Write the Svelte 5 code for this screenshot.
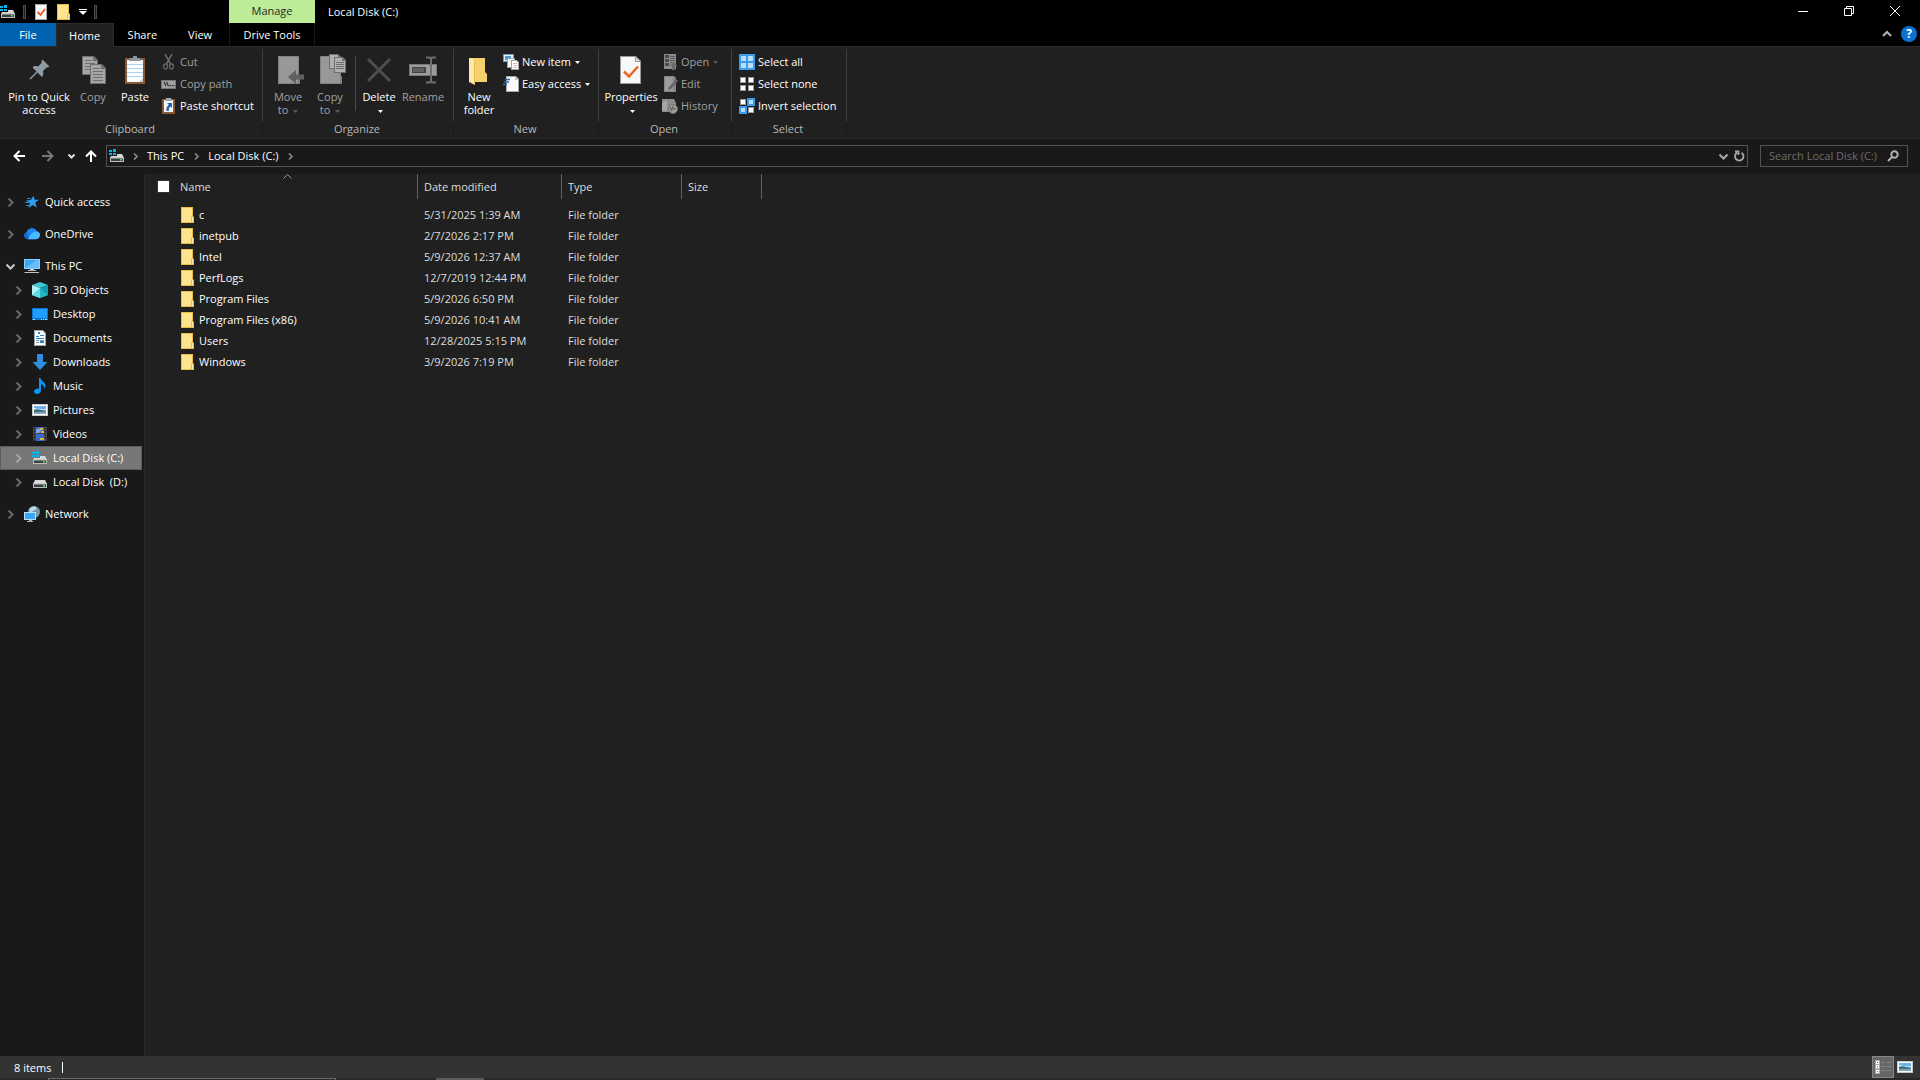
<script lang="ts">
  type NavItem = { label: string; icon: string; level: number; open?: boolean; gap?: boolean };

  const tabs = ["File", "Home", "Share", "View"];

  const navItems: NavItem[] = [
    { label: "Quick access", icon: "star", level: 0 },
    { label: "OneDrive", icon: "cloud", level: 0, gap: true },
    { label: "This PC", icon: "pc", level: 0, open: true, gap: true },
    { label: "3D Objects", icon: "cube", level: 1 },
    { label: "Desktop", icon: "desktop", level: 1 },
    { label: "Documents", icon: "document", level: 1 },
    { label: "Downloads", icon: "download", level: 1 },
    { label: "Music", icon: "music", level: 1 },
    { label: "Pictures", icon: "picture", level: 1 },
    { label: "Videos", icon: "video", level: 1 },
    { label: "Local Disk (C:)", icon: "drive-os", level: 1 },
    { label: "Local Disk  (D:)", icon: "drive", level: 1 },
    { label: "Network", icon: "network", level: 0, gap: true },
  ];

  const files = [
    { name: "c", date: "5/31/2025 1:39 AM" },
    { name: "inetpub", date: "2/7/2026 2:17 PM" },
    { name: "Intel", date: "5/9/2026 12:37 AM" },
    { name: "PerfLogs", date: "12/7/2019 12:44 PM" },
    { name: "Program Files", date: "5/9/2026 6:50 PM" },
    { name: "Program Files (x86)", date: "5/9/2026 10:41 AM" },
    { name: "Users", date: "12/28/2025 5:15 PM" },
    { name: "Windows", date: "3/9/2026 7:19 PM" },
  ];

  let activeTab = "Home";
  let selected = "Local Disk (C:)";
</script>

{#snippet caret()}
  <svg class="caret" width="5" height="3" viewBox="0 0 5 3"><path d="M0 0h5L2.5 3z" fill="currentColor" /></svg>
{/snippet}

{#snippet chevron(open = false)}
  <svg class="chevron" width="9" height="9" viewBox="0 0 9 9" fill="none" stroke="currentColor" stroke-width="2">
    <path d={open ? "M.5 2.5l4 4 4-4" : "M2.5 .5l4 4-4 4"} />
  </svg>
{/snippet}

{#snippet smallIcon(name: string)}
  <svg class="icon" width="16" height="16" viewBox="0 0 16 16">
    {#if name === "drive-os" || name === "drive"}
      <path d={name === "drive" ? "M3 6h10l2 4H1z" : "M8 6h5l2 4H1l1-2h6z"} fill="#d9d9d9" />
      <path d="M1 9.500h14V14H1z" fill="#bdbdbd" />
      <path d="M2 10.500h12V13H2z" fill="#3c3f41" />
      <path d="M11 11h2v1.500h-2z" fill="#3ee04b" />
      {#if name === "drive-os"}
        <path d="M0 2h3v2H0zM4 1h3v3H4zM0 5h3v2H0zM4 5h3v2H4z" fill="#00b4f0" />
      {/if}
    {:else if name === "star"}
      <path d="M9.600 1.500l1 4.200 4.400.1-3.700 2.800 1.400 4.900-4-2.600-4.100 3 1.200-4.700L2 6.400l4.900-.5z" fill="#2f9cf0" />
      <path d="M3 4h4v1H3zM1 8h5v1H1zM2 11h3v1H2z" fill="#2488d8" />
    {:else if name === "cloud"}
      <path d="M4 13.200C1.800 13.200 0 11.700 0 9.600 0 7.900 1.100 6.500 2.800 6.100 3.500 3.700 5.500 2.300 8 2.300c2.100 0 3.900 1.200 4.700 3 2 .3 3.300 1.900 3.300 3.800 0 2.300-1.700 4.100-4 4.100z" fill="#1268d6" />
      <path d="M2.800 6.100C3.500 3.700 5.500 2.300 8 2.300c2.100 0 3.900 1.200 4.700 3-3.200 0-5.700 2.700-7.900 6.500z" fill="#1e85f0" />
      <path d="M4 13.200c2.300-5.200 5.500-8.200 8.700-7.900 2 .3 3.300 1.900 3.300 3.800 0 2.300-1.700 4.100-4 4.100z" fill="#46baff" />
    {:else if name === "pc"}
      <path d="M0 1h16v10H0z" fill="#8fd0fa" />
      <path d="M1 2h14v8H1z" fill="#38a6f5" />
      <path d="M1 10L12 2h3v8z" fill="#65bcf8" />
      <path d="M6 11h4v1h2v1H4v-1h2zM1 14h14v1H0z" fill="#b8c4cc" />
    {:else if name === "cube"}
      <path d="M8 0l8 3-8 3-8-3z" fill="#3fcbd8" />
      <path d="M0 3l8 3v10l-8-3z" fill="#b2f1f5" />
      <path d="M16 3L8 6v10l8-3z" fill="#0f9cb4" />
      <path d="M8 6l8 7-8 3z" fill="#22b5c4" />
      <path d="M8 6l-8 7 8 3z" fill="#58dbe3" />
    {:else if name === "desktop"}
      <path d="M0 2h16v12H0z" fill="#0b76d2" />
      <path d="M1 3h14v9H1z" fill="#1e9fff" />
      <path d="M1 13h2v.8H1zM9 13h1v.8H9zM11 13h1v.8h-1zM13 13h2v.8h-2z" fill="#fff" />
    {:else if name === "document"}
      <path d="M2 0h9l3 3v13H2z" fill="#9ca3a8" />
      <path d="M3 1h7.500l2.500 2.500V15H3z" fill="#fff" />
      <path d="M6 2h2v2H6zM4 6h3v1H4zM8 5h4v1H8zM4 8h8v1H4zM8 11h4v2H8z" fill="#1c86d6" />
      <path d="M4 10h3v1H4zM4 12h3v1H4zM8 10h4v1H8z" fill="#87959e" />
    {:else if name === "download"}
      <path d="M5 0h6v8h4.500L8 16 .5 8H5z" fill="#2f8ee0" />
    {:else if name === "music"}
      <path d="M7 0h1.500c.3 3 4.500 4 5 7 .2 1.500-.4 2.800-1.500 4 .5-3-1-4.300-3-5v6.500c0 2-1.800 3.500-4 3.500-1.700 0-3-.9-3-2.400 0-1.900 2-3.100 5-3z" fill="#0a95f4" />
    {:else if name === "picture"}
      <path d="M0 2h16v12H0z" fill="#c8c8c8" />
      <path d="M1 3h14v10H1z" fill="#fff" />
      <path d="M2 4h12v8H2z" fill="#6cb1ea" />
      <path d="M2 6c3 0 5 2 12 1v1H2z" fill="#d7ecf8" />
      <path d="M2 8c3-2 7 0 12 1v3H2z" fill="#376a73" />
      <path d="M2 10l12-.5V12H2z" fill="#7fa6b8" />
    {:else if name === "video"}
      <path d="M1 1h14v14H1z" fill="#454545" />
      <path d="M4 1h8v6H4zM4 8h8v7H4z" fill="#3a66d0" />
      <path d="M4 4l3-2 2 3-2 2H4z" fill="#88a5ec" />
      <path d="M8 2h3v2H8zM9 5h3v2H9zM8 12h4v2H8z" fill="#e2b53d" />
      <path d="M2 2h1v1H2zM2 5h1v1H2zM2 8h1v1H2zM2 11h1v1H2zM2 14h1v1H2zM13 2h1v1h-1zM13 5h1v1h-1zM13 8h1v1h-1zM13 11h1v1h-1z" fill="#151515" />
    {:else if name === "network"}
      <circle cx="10" cy="6" r="6" fill="#7797a9" />
      <path d="M5.500 3C7 0 11 0 12 1c1 2-1 3-3 4s-2 2-3.500 1z" fill="#bcd8e6" />
      <path d="M0 6h12v8H0z" fill="#b9e3fc" />
      <path d="M1 7h10v6H1z" fill="#38a6f5" />
      <path d="M5 14h3v1h1v1H3v-1h2z" fill="#a9b6bd" />
    {:else if name === "check-page"}
      <path d="M2 0h12v16H2z" fill="#a8a8a8" />
      <path d="M3 1h10v14H3z" fill="#f7f9fa" />
      <path d="M4.500 8l3 3L12 5" fill="none" stroke="#f0541c" stroke-width="1.800" />
    {:else if name === "folder"}
      <path d="M1 0h12v9l1 1v6H1z" fill="#e9bd42" />
      <path d="M2 1h10v8l-1 1v5H2z" fill="#ffe48f" />
      <path d="M12 10h1v5h-1z" fill="#ffe9a8" />
    {:else if name === "cut"}
      <path d="M4 0l5.500 10M11 0L5.500 10" fill="none" stroke="#717171" stroke-width="1.500" />
      <ellipse cx="4.500" cy="12.500" rx="2" ry="2.500" fill="none" stroke="#646464" stroke-width="1.300" />
      <ellipse cx="10.500" cy="12.500" rx="2" ry="2.500" fill="none" stroke="#646464" stroke-width="1.300" />
    {:else if name === "path"}
      <path d="M0 4h15v9H0z" fill="#777" />
      <path d="M1 5h13v7H1z" fill="#a0a0a0" />
      <path d="M3 6l2 4M5.500 6l2 4" stroke="#303030" stroke-width="1.200" />
      <path d="M8.500 9H10v1.200H8.500zM10.800 9H12v1.200h-1.200zM12.500 9h1v1.200h-1z" fill="#303030" />
    {:else if name === "paste-shortcut"}
      <path d="M1 1h13v15H1z" fill="#8a5a36" />
      <path d="M3 2h9v12H3z" fill="#f5f7f9" />
      <path d="M5 0h5l1 3H4z" fill="#a0a7ac" />
      <path d="M6 5h5v5L9.500 8.500C8 9.500 7.500 11 8 13H5.500c-.6-2.500.4-4.500 2.300-6.200z" fill="#2764b0" />
    {:else if name === "new-item"}
      <path d="M0 0h11v8H0z" fill="#5da1c2" />
      <path d="M1 1h9v6H1z" fill="#e5f3f9" />
      <path d="M2 2h6v4H2z" fill="#4f9ac0" />
      <path d="M4 4h8v10H4z" fill="#9da3a7" />
      <path d="M5 5h6v8H5z" fill="#f4f4f4" />
      <path d="M8 6h6l2 2v8H8z" fill="#9da3a7" />
      <path d="M9 7h4.500L15 8.500V15H9z" fill="#fff" />
      <path d="M10 9h4v.8h-4zM10 11h4v.8h-4zM10 13h4v.8h-4z" fill="#d49ba6" />
    {:else if name === "easy-access"}
      <path d="M3 0h10l3 3v13H3z" fill="#a3a9ad" />
      <path d="M4 1h8.500L15 3.500V15H4z" fill="#fafafa" />
      <path d="M12 1v3h3z" fill="#b7bdc0" />
      <path d="M2 3.500h5M1 6h5M0 8.500h4" stroke="#2e6ca5" stroke-width="1.400" />
    {:else if name === "open"}
      <path d="M2 0h12v15H2z" fill="#8c8c8c" />
      <path d="M3 1h4v3H3zM3 5h4v3H3zM3 9h4v3H3z" fill="#4c4c4c" />
      <path d="M8 2h5v1H8zM8 4h5v1H8zM8 6h5v1H8zM8 8h2v1H8z" fill="#5a5a5a" />
      <path d="M11.500 8l4 4H13v4h-3v-4H8z" fill="#6a6a6a" />
    {:else if name === "edit"}
      <path d="M2 0h10l2 2v14H2z" fill="#858585" />
      <path d="M3 1h8v14H3z" fill="#9b9b9b" />
      <path d="M14 3l2 2-7 8-3 1 1-3z" fill="#656565" />
    {:else if name === "history"}
      <path d="M0 1h12l2 4v9H0z" fill="#8d8d8d" />
      <path d="M0 5l5-3v11H0z" fill="#a6a6a6" />
      <circle cx="11" cy="11" r="4.500" fill="#a2a2a2" stroke="#6f6f6f" />
      <path d="M11 8v3h3M8 9l2 4" fill="none" stroke="#555" stroke-width="1.200" />
    {:else if name === "select-all"}
      <path d="M0 0h16v16H0z" fill="#3a9ced" />
      <path d="M2 2h5v5H2zM9 2h5v5H9zM2 9h5v5H2zM9 9h5v5H9z" fill="#b8defa" />
    {:else if name === "select-none"}
      <path d="M1 1h6v6H1zM9 1h6v6H9zM1 9h6v6H1zM9 9h6v6H9z" fill="#9a9a9a" />
      <path d="M2 2h4v4H2zM10 2h4v4h-4zM2 10h4v4H2zM10 10h4v4h-4z" fill="#fff" />
    {:else if name === "invert"}
      <path d="M8 0h8v8H8zM0 8h8v8H0z" fill="#3a9ced" />
      <path d="M10 2h4v4h-4zM2 10h4v4H2z" fill="#b8defa" />
      <path d="M1 1h6v6H1zM9 9h6v6H9z" fill="#9a9a9a" />
      <path d="M2 2h4v4H2zM10 10h4v4h-4z" fill="#fff" />
    {/if}
  </svg>
{/snippet}

{#snippet bigIcon(name: string)}
  <svg class="big-icon" width="32" height="32" viewBox="0 0 32 32">
    {#if name === "pin"}
      <path d="M19.500 5.500l7 7-2 1-1 0-3.500 3.500c.8 3 .3 4.500-1 6l-4.500-4.500L8 25l-1.500.5.5-1.500 6.500-6.500L9.500 13.500c1.500-1.500 3-1.700 5.500-1l3.500-3.500V7z" fill="#8d9ba5" />
    {:else if name === "copy"}
      <path d="M5 2h12l4 4v15H5z" fill="#6f6f6f" />
      <path d="M6 3h10v4h4v13H6z" fill="#a5a5a5" />
      <path d="M8 6h7v1H8zM8 9h10v1H8zM8 12h10v1H8zM8 15h6v1H8z" fill="#6f6f6f" />
      <path d="M13 10h12l4 4v16H13z" fill="#6f6f6f" />
      <path d="M14 11h10v4h4v14H14z" fill="#a5a5a5" />
      <path d="M16 14h7v1h-7zM16 17h10v1H16zM16 20h10v1H16zM16 23h10v1H16zM16 26h10v1H16z" fill="#6f6f6f" />
    {:else if name === "paste"}
      <path d="M6 4h20v26H6z" fill="#8a5a36" />
      <path d="M8 6h16v22H8z" fill="#fbfcfd" />
      <path d="M8 10h16v1H8zM8 14h16v1H8zM8 18h16v1H8zM8 22h16v1H8z" fill="#a9d5ee" />
      <path d="M20 28l4-4v4z" fill="#c6ccd0" />
      <path d="M14 2h4v2h3l1 3H10l1-3h3z" fill="#8f969b" />
    {:else if name === "move" || name === "copy-to"}
      <path d="M6 2h21v20h1v8H6z" fill="#808080" />
      <path d="M7 3h19v26H7z" fill="#989898" />
      {#if name === "move"}
        <path d="M16 23l8-7v4.500h8v5h-8V30z" fill="#606060" />
      {:else}
        <path d="M15 0h9l3 3v12H15z" fill="#6f6f6f" />
        <path d="M16 1h8v3h2v10H16z" fill="#b0b0b0" />
        <path d="M20 3h9l3 3v13H20z" fill="#6f6f6f" />
        <path d="M21 4h7v3h3v11H21z" fill="#b0b0b0" />
        <path d="M22 8h8v1h-8zM22 10h8v1h-8zM22 12h8v1h-8zM22 14h8v1h-8z" fill="#6f6f6f" />
      {/if}
    {:else if name === "delete"}
      <path d="M5 5l22 22M27 5L5 27" stroke="#4e4e4e" stroke-width="3" />
    {:else if name === "rename"}
      <path d="M2 10h28v12H2z" fill="#777" />
      <path d="M3 11h26v10H3z" fill="#9c9c9c" />
      <path d="M5 13h14v6H5z" fill="#444" />
      <path d="M6 14h11v4H6z" fill="#606060" />
      <path d="M19 3.500h3c2 0 2 1 2 2v21c0 1 0 2-2 2h-3M29 3.500h-3c-2 0-2 1-2 2v21c0 1 0 2 2 2h3" fill="none" stroke="#6e6e6e" stroke-width="2" />
    {:else if name === "new-folder"}
      <path d="M6 4h16v14l2 2v8H6z" fill="#f4d16d" />
      <path d="M6 4l6 2v25l-6-3z" fill="#ffe9a6" />
      <path d="M12 6v25l-1-1V6z" fill="#e7bd55" />
    {:else if name === "properties"}
      <path d="M5 2h16l5 5v23H5z" fill="#9a9a9a" />
      <path d="M6 3h14v5h5v21H6z" fill="#f6f7f8" />
      <path d="M21 3.500V7h3.500z" fill="#dfe2e4" />
      <path d="M9 17.500l5 5 9-10" fill="none" stroke="#f26322" stroke-width="2.500" />
    {/if}
  </svg>
{/snippet}

{#snippet small(icon: string, label: string, disabled = false, menu = false)}
  <button class="small-btn" class:disabled>
    {@render smallIcon(icon)}
    <span>{label}</span>
    {#if menu}{@render caret()}{/if}
  </button>
{/snippet}

<div class="window">
  <header class="title-bar">
    <div class="title-left">
      <div class="quick-tools">
        {@render smallIcon("drive-os")}
        <i class="grip"></i>
        <button aria-label="Properties">{@render smallIcon("check-page")}</button>
        <button aria-label="New folder">{@render smallIcon("folder")}</button>
        <button aria-label="Customize Quick Access Toolbar">
          <svg width="8" height="6" viewBox="0 0 8 6" fill="currentColor"><path d="M0 0h8v1H0zM0 2h8L4 6z" /></svg>
        </button>
        <i class="grip"></i>
      </div>
      <nav class="tabs">
        {#each tabs as tab}
          <button
            class="tab"
            class:file={tab === "File"}
            class:active={activeTab === tab}
            on:click={() => {
              activeTab = tab;
            }}>{tab}</button
          >
        {/each}
      </nav>
    </div>
    <div class="tool-tab">
      <div class="manage">Manage</div>
      <button class="drive-tools">Drive Tools</button>
    </div>
    <h1>Local Disk (C:)</h1>
    <div class="title-right">
      <div class="controls">
        <button aria-label="Minimize">
          <svg width="10" height="10" viewBox="0 0 10 10"><path d="M0 5h10v1H0z" fill="#fff" /></svg>
        </button>
        <button aria-label="Restore">
          <svg width="10" height="10" viewBox="0 0 10 10" fill="none" stroke="#fff">
            <path d="M.5 2.500h7v7h-7zM2.500 2V.5h7v7H8" />
          </svg>
        </button>
        <button aria-label="Close">
          <svg width="10" height="10" viewBox="0 0 10 10" fill="none" stroke="#fff"><path d="M0 0l10 10M10 0L0 10" /></svg>
        </button>
      </div>
      <div class="ribbon-tools">
        <button aria-label="Minimize the Ribbon">
          <svg width="10" height="7" viewBox="0 0 10 7" fill="none" stroke="#b4b4b4" stroke-width="2"><path d="M1 6l4-4 4 4" /></svg>
        </button>
        <button class="help" aria-label="Help">?</button>
      </div>
    </div>
  </header>

  <div class="ribbon">
    <section class="group clipboard">
      <div class="group-body">
        <button class="big-btn pin">{@render bigIcon("pin")}<span>Pin to Quick<br />access</span></button>
        <button class="big-btn copy disabled">{@render bigIcon("copy")}<span>Copy</span></button>
        <button class="big-btn">{@render bigIcon("paste")}<span>Paste</span></button>
        <div class="stack">
          {@render small("cut", "Cut", true)}
          {@render small("path", "Copy path", true)}
          {@render small("paste-shortcut", "Paste shortcut")}
        </div>
      </div>
      <div class="group-label">Clipboard</div>
    </section>

    <section class="group organize">
      <div class="group-body">
        <button class="big-btn narrow disabled">{@render bigIcon("move")}<span>Move<br />to {@render caret()}</span></button>
        <button class="big-btn narrow disabled">{@render bigIcon("copy-to")}<span>Copy<br />to {@render caret()}</span></button>
        <i class="divider"></i>
        <button class="big-btn narrow">{@render bigIcon("delete")}<span>Delete<br />{@render caret()}</span></button>
        <button class="big-btn disabled">{@render bigIcon("rename")}<span>Rename</span></button>
      </div>
      <div class="group-label">Organize</div>
    </section>

    <section class="group new">
      <div class="group-body">
        <button class="big-btn narrow">{@render bigIcon("new-folder")}<span>New<br />folder</span></button>
        <div class="stack">
          {@render small("new-item", "New item", false, true)}
          {@render small("easy-access", "Easy access", false, true)}
        </div>
      </div>
      <div class="group-label">New</div>
    </section>

    <section class="group open">
      <div class="group-body">
        <button class="big-btn wide">{@render bigIcon("properties")}<span>Properties<br />{@render caret()}</span></button>
        <div class="stack">
          {@render small("open", "Open", true, true)}
          {@render small("edit", "Edit", true)}
          {@render small("history", "History", true)}
        </div>
      </div>
      <div class="group-label">Open</div>
    </section>

    <section class="group select">
      <div class="group-body">
        <div class="stack">
          {@render small("select-all", "Select all")}
          {@render small("select-none", "Select none")}
          {@render small("invert", "Invert selection")}
        </div>
      </div>
      <div class="group-label">Select</div>
    </section>
  </div>

  <div class="address-row">
    <div class="history">
      <button aria-label="Back">
        <svg width="12" height="12" viewBox="0 0 12 12" fill="none" stroke="#fff" stroke-width="2"><path d="M12 6H1.500M6.500 1l-5 5 5 5" /></svg>
      </button>
      <button aria-label="Forward">
        <svg width="12" height="12" viewBox="0 0 12 12" fill="none" stroke="#787878" stroke-width="2"><path d="M0 6h10.500M5.500 1l5 5-5 5" /></svg>
      </button>
      <button class="recent" aria-label="Recent locations">
        <svg width="7" height="5" viewBox="0 0 7 5" fill="none" stroke="#ddd" stroke-width="2"><path d="M.5 .5l3 3 3-3" /></svg>
      </button>
      <button class="up" aria-label="Up">
        <svg width="12" height="12" viewBox="0 0 12 12" fill="none" stroke="#fff" stroke-width="2"><path d="M6 12V1.500M1 6.500l5-5 5 5" /></svg>
      </button>
    </div>
    <div class="address">
      {@render smallIcon("drive-os")}
      <span class="crumb-sep">{@render chevron()}</span>
      <a href="#this-pc">This PC</a>
      <span class="crumb-sep">{@render chevron()}</span>
      <a href="#local-disk">Local Disk (C:)</a>
      <span class="crumb-sep">{@render chevron()}</span>
      <button class="previous" aria-label="Previous locations">{@render chevron(true)}</button>
      <button class="refresh" aria-label="Refresh">
        <svg width="11" height="12" viewBox="0 0 11 12" fill="none" stroke="#a8a8a8" stroke-width="1.800">
          <path d="M7.500 2.800a4.200 4.200 0 1 1-4.500 0M1 1.500h3.500V5" />
        </svg>
      </button>
    </div>
    <label class="search">
      <input type="text" placeholder="Search Local Disk (C:)" aria-label="Search Local Disk (C:)" />
      <svg width="12" height="12" viewBox="0 0 12 12" fill="none" stroke="#b0b0b0" stroke-width="2"><circle cx="7.500" cy="4.500" r="3.200" /><path d="M5 7l-4 4" /></svg>
    </label>
  </div>

  <main class="content">
    <nav class="nav-pane">
      {#each navItems as item}
        <button
          class="nav-item"
          class:child={item.level === 1}
          class:gap={item.gap}
          class:open={item.open}
          class:selected={selected === item.label}
          on:click={() => {
            selected = item.label;
          }}
        >
          {@render chevron(item.open)}
          {@render smallIcon(item.icon)}
          <span>{item.label}</span>
        </button>
      {/each}
    </nav>

    <div class="file-pane">
      <table>
        <thead>
          <tr>
            <th class="col-name">
              <div class="head">
                <input type="checkbox" aria-label="Select all items" />
                <span>Name</span>
                <svg class="sort" width="9" height="5" viewBox="0 0 9 5" fill="none" stroke="#9a9a9a"><path d="M.5 4.500l4-4 4 4" /></svg>
              </div>
            </th>
            <th class="col-date"><div class="head">Date modified</div></th>
            <th class="col-type"><div class="head">Type</div></th>
            <th class="col-size"><div class="head">Size</div></th>
          </tr>
        </thead>
        <tbody>
          {#each files as file}
            <tr>
              <td><div class="file-name">{@render smallIcon("folder")}<span>{file.name}</span></div></td>
              <td>{file.date}</td>
              <td>File folder</td>
              <td></td>
            </tr>
          {/each}
        </tbody>
      </table>
    </div>
  </main>

  <footer class="status-bar">
    <span class="count">8 items</span>
    <div class="views">
      <button class="details" aria-label="Details">
        <svg width="16" height="14" viewBox="0 0 16 14">
          <path d="M0 0h5v14H0z" fill="#aaa" />
          <path d="M1 1h3v3H1zM1 5h3v3H1zM1 10h3v3H1z" fill="#fff" />
          <path d="M2 2h1v1H2z" fill="#444" />
          <path d="M2 6h1v1H2z" fill="#2d7fd0" />
          <path d="M2 11h1v1H2z" fill="#c53a3a" />
          <path d="M6 2h4v1H6zM12 2h4v1h-4zM6 6h4v1H6zM12 6h4v1h-4zM6 10h4v1H6zM12 10h4v1h-4z" fill="#878787" />
        </svg>
      </button>
      <button class="large" aria-label="Large thumbnails">{@render smallIcon("picture")}</button>
    </div>
  </footer>
  <div class="taskbar-edge"><i class="task-search"></i><i class="task-app"></i></div>
</div>

<style>
  :global(body) {
    background: #202020;
  }

  .window {
    min-height: 100vh;
    display: flex;
    flex-direction: column;
    color: #fff;
    background: #191919;
    font-family: "Segoe UI", "Open Sans", "Noto Sans", sans-serif;
    font-size: 11px;
    line-height: 16px;
    white-space: nowrap;
  }

  button {
    padding: 0;
    border: none;
    background: none;
    color: inherit;
    font: inherit;
    display: flex;
    align-items: center;
    justify-content: center;
  }

  svg {
    display: block;
    flex: none;
  }

  .title-bar {
    height: 46px;
    display: flex;
    background: #000;
  }

  .title-left {
    width: 229px;
    display: flex;
    flex-direction: column;
  }

  .quick-tools {
    height: 23px;
    display: flex;
    align-items: center;
    gap: 7px;
  }

  .grip {
    width: 1px;
    height: 12px;
    border: 1px solid #4a4a4a;
    background: #222;
  }

  .tabs {
    flex: 1;
    display: flex;
  }

  .tab {
    width: 58px;
  }

  .tab.active {
    position: relative;
    margin-bottom: -1px;
    border: 1px solid #2b2b2b;
    border-bottom: none;
    background: #202020;
  }

  .tab.file {
    width: 56px;
    border-color: #0063b1;
    background: #0063b1;
  }

  .tool-tab {
    width: 86px;
    text-align: center;
  }

  .manage {
    height: 23px;
    line-height: 21px;
    color: #262626;
    background: #bdec97;
  }

  .drive-tools {
    width: 100%;
    height: 23px;
    border-left: 1px solid #1a1a1a;
    border-right: 1px solid #1a1a1a;
  }

  h1 {
    flex: 1;
    margin: 0;
    padding-left: 13px;
    font-size: 11px;
    font-weight: 400;
    line-height: 23px;
  }

  .controls {
    display: flex;
    height: 21px;
    padding-right: 2px;
  }

  .controls button {
    width: 46px;
  }

  .ribbon-tools {
    height: 25px;
    display: flex;
    justify-content: flex-end;
    align-items: center;
    gap: 9px;
    padding-right: 3px;
  }

  .help {
    width: 16px;
    height: 16px;
    border-radius: 50%;
    background: #0b71d3;
    font-size: 12px;
    font-weight: 700;
  }

  .ribbon {
    height: 91px;
    display: flex;
    border-top: 1px solid #2b2b2b;
    border-bottom: 1px solid #2b2b2b;
    background: #202020;
  }

  .group {
    padding-top: 2px;
  }

  .clipboard {
    width: 263px;
  }

  .organize {
    width: 191px;
  }

  .new {
    width: 145px;
  }

  .open {
    width: 133px;
  }

  .select {
    width: 115px;
  }

  .group-body {
    height: 72px;
    display: flex;
    padding-left: 4px;
    border-right: 1px solid #3f3f3f;
  }

  .group-label {
    height: 14px;
    padding-right: 2px;
    border-right: 1px solid #191919;
    text-align: center;
    color: #b8b8b8;
  }

  .big-btn {
    width: 46px;
    padding-top: 5px;
    flex-direction: column;
    justify-content: flex-start;
    gap: 4px;
    line-height: 13px;
  }

  .big-btn.pin {
    width: 70px;
  }

  .big-btn.copy {
    width: 38px;
  }

  .big-btn.narrow {
    width: 42px;
  }

  .big-btn.wide {
    width: 56px;
  }

  .disabled {
    color: #a0a0a0;
  }

  .caret {
    display: inline-block;
    margin-left: 2px;
    vertical-align: middle;
    color: #fff;
  }

  .disabled .caret {
    color: #5a5a5a;
  }

  .divider {
    width: 1px;
    height: 55px;
    margin: 7px 2px 0 4px;
    background: #4a4a4a;
  }

  .stack {
    padding: 2px 0 0 3px;
  }

  .small-btn {
    height: 22px;
    gap: 3px;
  }

  .small-btn .caret {
    margin-left: 1px;
  }

  .address-row {
    box-sizing: border-box;
    height: 35px;
    display: flex;
    align-items: center;
    padding-bottom: 1px;
    background: #191919;
  }

  .history {
    width: 106px;
    display: flex;
    align-items: center;
  }

  .history button:first-child {
    width: 24px;
    margin-left: 7px;
  }

  .history button {
    width: 36px;
  }

  .history .recent {
    width: 11px;
  }

  .history .up {
    width: 30px;
  }

  .address {
    flex: 1;
    height: 20px;
    display: flex;
    align-items: center;
    padding-left: 2px;
    border: 1px solid #535353;
  }

  .crumb-sep {
    width: 20px;
    display: flex;
    justify-content: center;
    color: #8c8c8c;
  }

  .crumb-sep .chevron {
    width: 7px;
    height: 7px;
  }

  .address a {
    padding: 0 2px;
    color: #fff;
    text-decoration: none;
  }

  .previous {
    width: 16px;
    height: 20px;
    margin-left: auto;
    color: #a8a8a8;
    border-right: 1px solid #141414;
  }

  .refresh {
    width: 15px;
  }

  .search {
    box-sizing: border-box;
    width: 148px;
    height: 22px;
    display: flex;
    align-items: center;
    margin: 0 12px;
    padding: 0 8px;
    border: 1px solid #535353;
  }

  .search input {
    flex: 1;
    min-width: 0;
    padding: 0;
    border: none;
    outline: none;
    background: none;
    color: #fff;
    font: inherit;
  }

  .search input::placeholder {
    color: #6e6e6e;
    opacity: 1;
  }

  .content {
    flex: 1;
    display: flex;
  }

  .nav-pane {
    box-sizing: border-box;
    width: 145px;
    padding: 16px 2px 0 0;
    border-right: 1px solid #2b2b2b;
    background: #191919;
  }

  .nav-item {
    box-sizing: border-box;
    width: 100%;
    height: 24px;
    justify-content: flex-start;
    gap: 5px;
    padding-left: 5px;
    border: 1px solid transparent;
    white-space: pre;
  }

  .nav-item.gap {
    margin-top: 8px;
  }

  .nav-item.child {
    padding-left: 13px;
  }

  .nav-item .chevron {
    margin-right: 4px;
    color: #6c6c6c;
  }

  .nav-item.open .chevron {
    color: #c8c8c8;
  }

  .nav-item.selected {
    background: #777;
    border-color: #5c5c5c;
  }

  .nav-item.selected .chevron {
    color: #a8a8a8;
  }

  .file-pane {
    flex: 1;
    padding-left: 12px;
    background: #202020;
  }

  table {
    width: 605px;
    table-layout: fixed;
    border-collapse: collapse;
    color: #dedede;
  }

  .col-name {
    width: 261px;
  }

  .col-date {
    width: 144px;
  }

  .col-type {
    width: 120px;
  }

  .col-size {
    width: 80px;
  }

  th {
    padding: 0 0 5px;
    font-weight: 400;
    text-align: left;
  }

  .head {
    position: relative;
    height: 25px;
    display: flex;
    align-items: center;
    padding-left: 6px;
    border-right: 1px solid #636363;
  }

  .col-name .head {
    gap: 10px;
    padding-left: 0;
  }

  .head input {
    appearance: none;
    box-sizing: border-box;
    width: 13px;
    height: 13px;
    margin: 0;
    border: 1px solid #333;
    background: #fff;
  }

  .sort {
    position: absolute;
    top: 0;
    left: 50%;
    margin-left: -4px;
  }

  td {
    height: 21px;
    padding: 0 0 0 6px;
  }

  td:first-child {
    padding-left: 23px;
  }

  .file-name {
    display: flex;
    align-items: center;
    gap: 3px;
    color: #fff;
  }

  .status-bar {
    height: 22px;
    display: flex;
    align-items: center;
    padding: 0 7px 0 14px;
    background: #333;
  }

  .count {
    padding-right: 11px;
    border-right: 1px solid #fff;
    line-height: 11px;
  }

  .views {
    height: 22px;
    display: flex;
    gap: 3px;
    margin-left: auto;
  }

  .details {
    box-sizing: border-box;
    width: 22px;
    border: 1px solid #858585;
    background: #666;
  }

  .large {
    width: 16px;
  }

  .taskbar-edge {
    height: 2px;
    display: flex;
    gap: 100px;
    padding-left: 48px;
    background: #2a2727;
  }

  .task-search {
    width: 286px;
    border: 1px solid #696666;
    border-bottom: none;
  }

  .task-app {
    width: 48px;
    background: #5e5b5b;
  }
</style>
